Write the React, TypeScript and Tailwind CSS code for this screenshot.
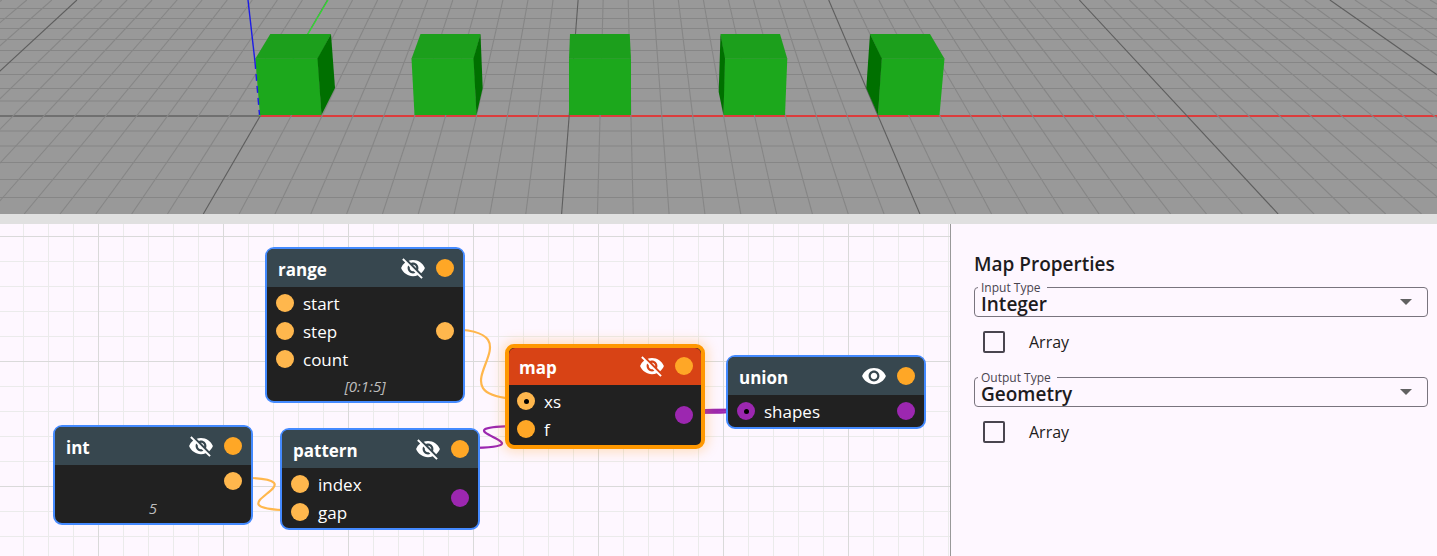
import { useState } from "react";
import { MdVisibility, MdVisibilityOff } from "react-icons/md";

const ROW_LINES = [8, 18, 28, 39, 50, 62, 74, 88, 100, 130, 145, 162, 179, 197];
const COLUMN_LINES = Array.from({ length: 61 }, (_, i) => i - 15);

type Cube = { front: string; top: string; side?: string };

const CUBES: Cube[] = [
  {
    front: "255.3,58.5 318,58.5 321.5,115 260,115",
    top: "255.3,58.8 270.3,34 331,34 318,58.8",
    side: "331,34 335,88 321.5,115 317.5,58.5",
  },
  {
    front: "411.5,58.5 474,58.5 476.5,115 414.5,115",
    top: "411.5,58.8 420.5,34 480.5,34 474,58.8",
    side: "480.5,34 482.7,88 476.5,115 473.5,58.5",
  },
  { front: "569,58.5 631,58.5 631,115 569,115", top: "569,58.8 570,34 629.7,34 631,58.8" },
  {
    front: "724.5,58.5 787.3,58.5 785,115 723.5,115",
    top: "724.5,58.8 720.5,34 780,34 787.3,58.8",
    side: "720.5,34 718.7,92 723.5,115 725,58.5",
  },
  {
    front: "881.5,58.5 944.5,58.5 939.5,115 878,115",
    top: "881.5,58.8 870,34 930,34 944.5,58.8",
    side: "870,34 866.3,88 878,115 881.8,58.5",
  },
];

function Viewport() {
  return (
    <section aria-label="3D view" className="h-[214px] shrink-0 bg-[#999999]">
      <svg
        className="block h-full w-full"
        viewBox="0 0 1437 214"
        preserveAspectRatio="xMidYMid slice"
        role="img"
        aria-label="Five green cubes in a row"
      >
        {ROW_LINES.map((y) => (
          <rect
            key={y}
            x="0"
            y={y}
            width="1437"
            height={y >= 100 && y < 150 ? 2 : 1}
            fill={y >= 100 && y < 150 ? "#8f8f8f" : "#868686"}
          />
        ))}
        <rect x="0" y="115" width="259" height="2" fill="#707070" />
        <rect x="259" y="115" width="1178" height="2" fill="#dc3c3c" />
        {COLUMN_LINES.map((k) => (
          <line
            key={k}
            x1={327.5 + 25.06 * k}
            y1="0"
            x2={203.3 + 35.83 * k}
            y2="214"
            stroke={k % 10 === 0 ? "#5e5e5e" : "#868686"}
            strokeWidth="1.1"
          />
        ))}
        <line x1="328" y1="0" x2="259.5" y2="116" stroke="#32dc32" strokeWidth="1.4" />
        {CUBES.map((cube) => (
          <g key={cube.front}>
            <polygon points={cube.front} fill="#1ca81c" />
            <polygon points={cube.top} fill="#1c9f1c" />
            {cube.side && <polygon points={cube.side} fill="#007000" />}
          </g>
        ))}
        <line x1="248" y1="0" x2="255" y2="62" stroke="#1c1ce6" strokeWidth="1.4" />
        <line x1="255" y1="62" x2="259.5" y2="115" stroke="#1c1ce6" strokeWidth="1.4" strokeDasharray="7 5" />
      </svg>
    </section>
  );
}

type Tone = "amber" | "orange" | "purple";

const TONES: Record<Tone, string> = {
  amber: "bg-[#ffb74d]",
  orange: "bg-[#ffa726]",
  purple: "bg-[#9c27b0]",
};

function Port({ tone, linked = false }: { tone: Tone; linked?: boolean }) {
  return (
    <span className={`flex size-[18px] shrink-0 items-center justify-center rounded-full ${TONES[tone]}`}>
      {linked && <span className="size-[5px] rounded-full bg-black" />}
    </span>
  );
}

type NodeProps = {
  name: string;
  place: string;
  inputs: { name: string; tone: Tone; linked?: boolean }[];
  output: Tone;
  value?: string;
  initiallyVisible?: boolean;
  selected?: boolean;
};

function GraphNode({ name, place, inputs, output, value, initiallyVisible = false, selected = false }: NodeProps) {
  const [visible, setVisible] = useState(initiallyVisible);
  const Eye = visible ? MdVisibility : MdVisibilityOff;
  const frame = selected
    ? "border-4 border-[#ff9800] shadow-[0_0_12px_3px_rgba(255,152,0,0.25)]"
    : "border-2 border-[#448aff]";
  const heading = selected ? "h-[37px] bg-[#d84315] px-2 pb-0.5" : "h-[38px] bg-[#37474f] px-[9px] pb-px";
  return (
    <article className={`absolute w-[200px] rounded-[9px] bg-[#212121] text-white ${frame} ${place}`}>
      <header className={`flex items-center rounded-t-md ${heading}`}>
        <h2 className="flex-1 pt-1 pl-0.5 text-[17px] leading-6 font-bold">{name}</h2>
        <button type="button" aria-label={`Toggle visibility of ${name}`} onClick={() => setVisible(!visible)}>
          <Eye size={26} />
        </button>
        <span className="ml-2.5">
          <Port tone="orange" />
        </span>
      </header>
      <div className={`flex items-center pt-0.5 ${selected ? "px-2" : "px-[9px]"}`}>
        <ul className="flex-1">
          {inputs.map((input) => (
            <li key={input.name} className="flex h-7 items-center gap-[9px]">
              <Port tone={input.tone} linked={input.linked} />
              <span className="pt-0.5 text-[17px] leading-6">{input.name}</span>
            </li>
          ))}
        </ul>
        <span className="flex h-7 items-center">
          <Port tone={output} />
        </span>
      </div>
      {value ? (
        <p className="pt-px pb-[3px] text-center text-[15px] leading-6 text-[#bdbdbd] italic">{value}</p>
      ) : (
        <div className="h-0.5" />
      )}
    </article>
  );
}

function Canvas() {
  return (
    <section aria-label="Node graph" className="relative min-w-0 flex-1 overflow-hidden">
      <svg className="absolute inset-0 h-full w-full" aria-hidden="true">
        <defs>
          <pattern id="grid" x="98" y="12" width="125" height="125" patternUnits="userSpaceOnUse">
            <path
              d="M25.5 0V125M50.5 0V125M75.5 0V125M100.5 0V125M0 25.5H125M0 50.5H125M0 75.5H125M0 100.5H125"
              stroke="#ebebeb"
            />
            <path d="M0.5 0V125M0 0.5H125" stroke="#dadada" />
          </pattern>
        </defs>
        <rect width="100%" height="100%" fill="url(#grid)" />
        <g fill="none" strokeWidth="2.2">
          <path d="M445 105C553 105 418 175 526 175" stroke="#ffb74d" />
          <path d="M233 253.500C341 253.500 192 286.500 300 286.500" stroke="#ffb74d" />
          <path d="M460 224C570 224 416 202 526 202" stroke="#9c27b0" />
          <path d="M684 188.500C794 188.500 636 186 746 186" stroke="#9c27b0" strokeWidth="3" />
        </g>
      </svg>
      <GraphNode
        name="range"
        place="left-[265px] top-[23px]"
        inputs={[
          { name: "start", tone: "amber" },
          { name: "step", tone: "amber" },
          { name: "count", tone: "amber" },
        ]}
        output="amber"
        value="[0:1:5]"
      />
      <GraphNode name="int" place="left-[53px] top-[201px]" inputs={[]} output="amber" value="5" />
      <GraphNode
        name="pattern"
        place="left-[280px] top-[204px]"
        inputs={[
          { name: "index", tone: "amber" },
          { name: "gap", tone: "amber" },
        ]}
        output="purple"
      />
      <GraphNode
        name="map"
        place="left-[505px] top-[120px]"
        inputs={[
          { name: "xs", tone: "amber", linked: true },
          { name: "f", tone: "orange" },
        ]}
        output="purple"
        selected
      />
      <GraphNode
        name="union"
        place="left-[726px] top-[131px]"
        inputs={[{ name: "shapes", tone: "purple", linked: true }]}
        output="purple"
        initiallyVisible
      />
    </section>
  );
}

function TypeField({ id, label, initial }: { id: string; label: string; initial: string }) {
  return (
    <div className="flex flex-col">
      <div className="relative">
        <label
          htmlFor={id}
          className="absolute -top-[7px] left-1 bg-[#fef7ff] pr-1.5 pl-[3px] text-xs leading-4 text-[#49454f]"
        >
          {label}
        </label>
        <select
          id={id}
          defaultValue={initial}
          className="block h-[30px] w-full appearance-none rounded-[4px] border border-[#79747e] bg-transparent pt-1 pl-1.5 text-[19px] leading-6 font-semibold text-[#1d1b20]"
        >
          <option>Integer</option>
          <option>Geometry</option>
        </select>
        <svg
          className="pointer-events-none absolute top-3 right-4 h-[6px] w-3"
          viewBox="0 0 12 6"
          aria-hidden="true"
        >
          <path d="M0 0H12L6 6Z" fill="#616161" />
        </svg>
      </div>
      <label className="mt-[11px] flex h-7 items-center gap-6 pl-[9px] text-base text-[#1d1b20]">
        <input
          type="checkbox"
          className="size-[22px] appearance-none rounded-[2px] border-2 border-[#49454f] checked:bg-[#6750a4]"
        />
        Array
      </label>
    </div>
  );
}

function Properties() {
  return (
    <aside className="w-[487px] shrink-0 border-l border-[#999999] pt-7 pr-[9px] pl-[23px]">
      <h1 className="text-[19px] leading-6 font-semibold text-[#1d1b20]">Map Properties</h1>
      <div className="mt-[11px] flex flex-col gap-[21px]">
        <TypeField id="input-type" label="Input Type" initial="Integer" />
        <TypeField id="output-type" label="Output Type" initial="Geometry" />
      </div>
    </aside>
  );
}

export default function App() {
  return (
    <main className="flex h-screen min-h-[540px] flex-col bg-[#fef7ff] font-['Open_Sans','Noto_Sans',sans-serif]">
      <Viewport />
      <div className="h-2.5 shrink-0 bg-[#e0e0e0]" />
      <div className="flex min-h-0 flex-1">
        <Canvas />
        <Properties />
      </div>
    </main>
  );
}
